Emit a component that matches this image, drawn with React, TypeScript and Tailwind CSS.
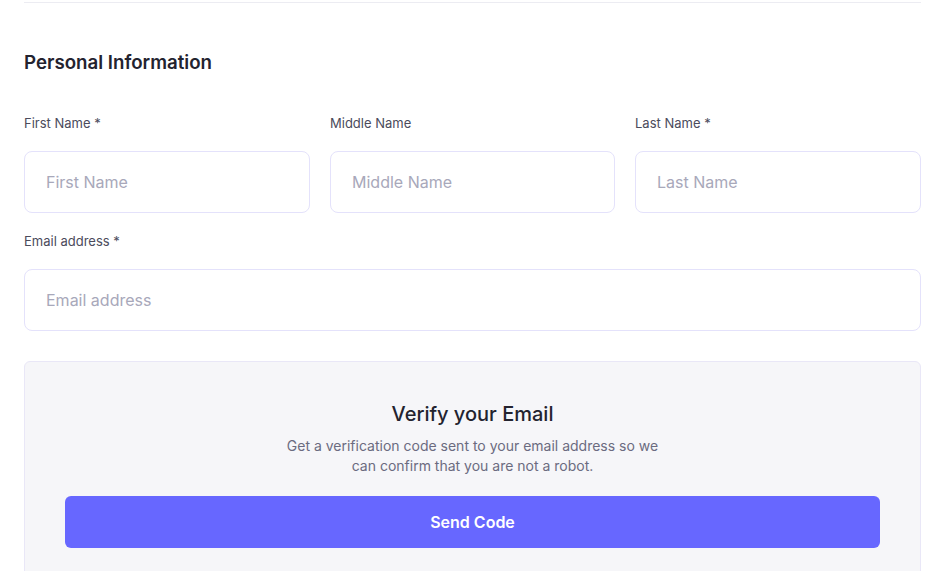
import React from "react";

function Field({ label, placeholder }: { label: string; placeholder: string }) {
  return (
    <div className="flex flex-col">
      <label className="text-[13px] leading-[18px] text-[#4b4b5c] mb-[19px]">{label}</label>
      <input
        placeholder={placeholder}
        className="h-[62px] w-full rounded-[8px] border border-[#e4e2fb] bg-white px-[21px] text-[16px] text-[#23232f] placeholder:text-[#a8a8ba] outline-none"
      />
    </div>
  );
}

export default function App() {
  return (
    <div className="w-[944px] h-[571px] overflow-hidden bg-white pl-6 pr-[23px] font-['Inter',sans-serif]">
      <div className="mt-[2px] h-px bg-[#ececf2]" />
      <h2 className="mt-[48px] text-[18.7px] leading-[24px] font-semibold text-[#23232f]">Personal Information</h2>
      <div className="mt-[39px] grid grid-cols-[286px_285px_286px] gap-x-[20px]">
        <Field label="First Name *" placeholder="First Name" />
        <Field label="Middle Name" placeholder="Middle Name" />
        <Field label="Last Name *" placeholder="Last Name" />
      </div>
      <div className="mt-[19px]">
        <Field label="Email address *" placeholder="Email address" />
      </div>
      <div className="mt-[30px] rounded-[6px] border border-[#e9e7f7] bg-[#f6f6f9] px-10 pt-[40px] pb-10 flex flex-col items-center">
        <h3 className="text-[20px] leading-[24px] font-medium text-[#23232f]">Verify your Email</h3>
        <p className="mt-[10px] max-w-[390px] text-center text-[14px] leading-[20px] text-[#6b6b80]">
          Get a verification code sent to your email address so we can confirm that you are not a robot.
        </p>
        <button className="mt-[20px] h-[52px] w-full rounded-[6px] bg-[#6767ff] text-[16px] font-semibold text-white">
          Send Code
        </button>
      </div>
    </div>
  );
}
